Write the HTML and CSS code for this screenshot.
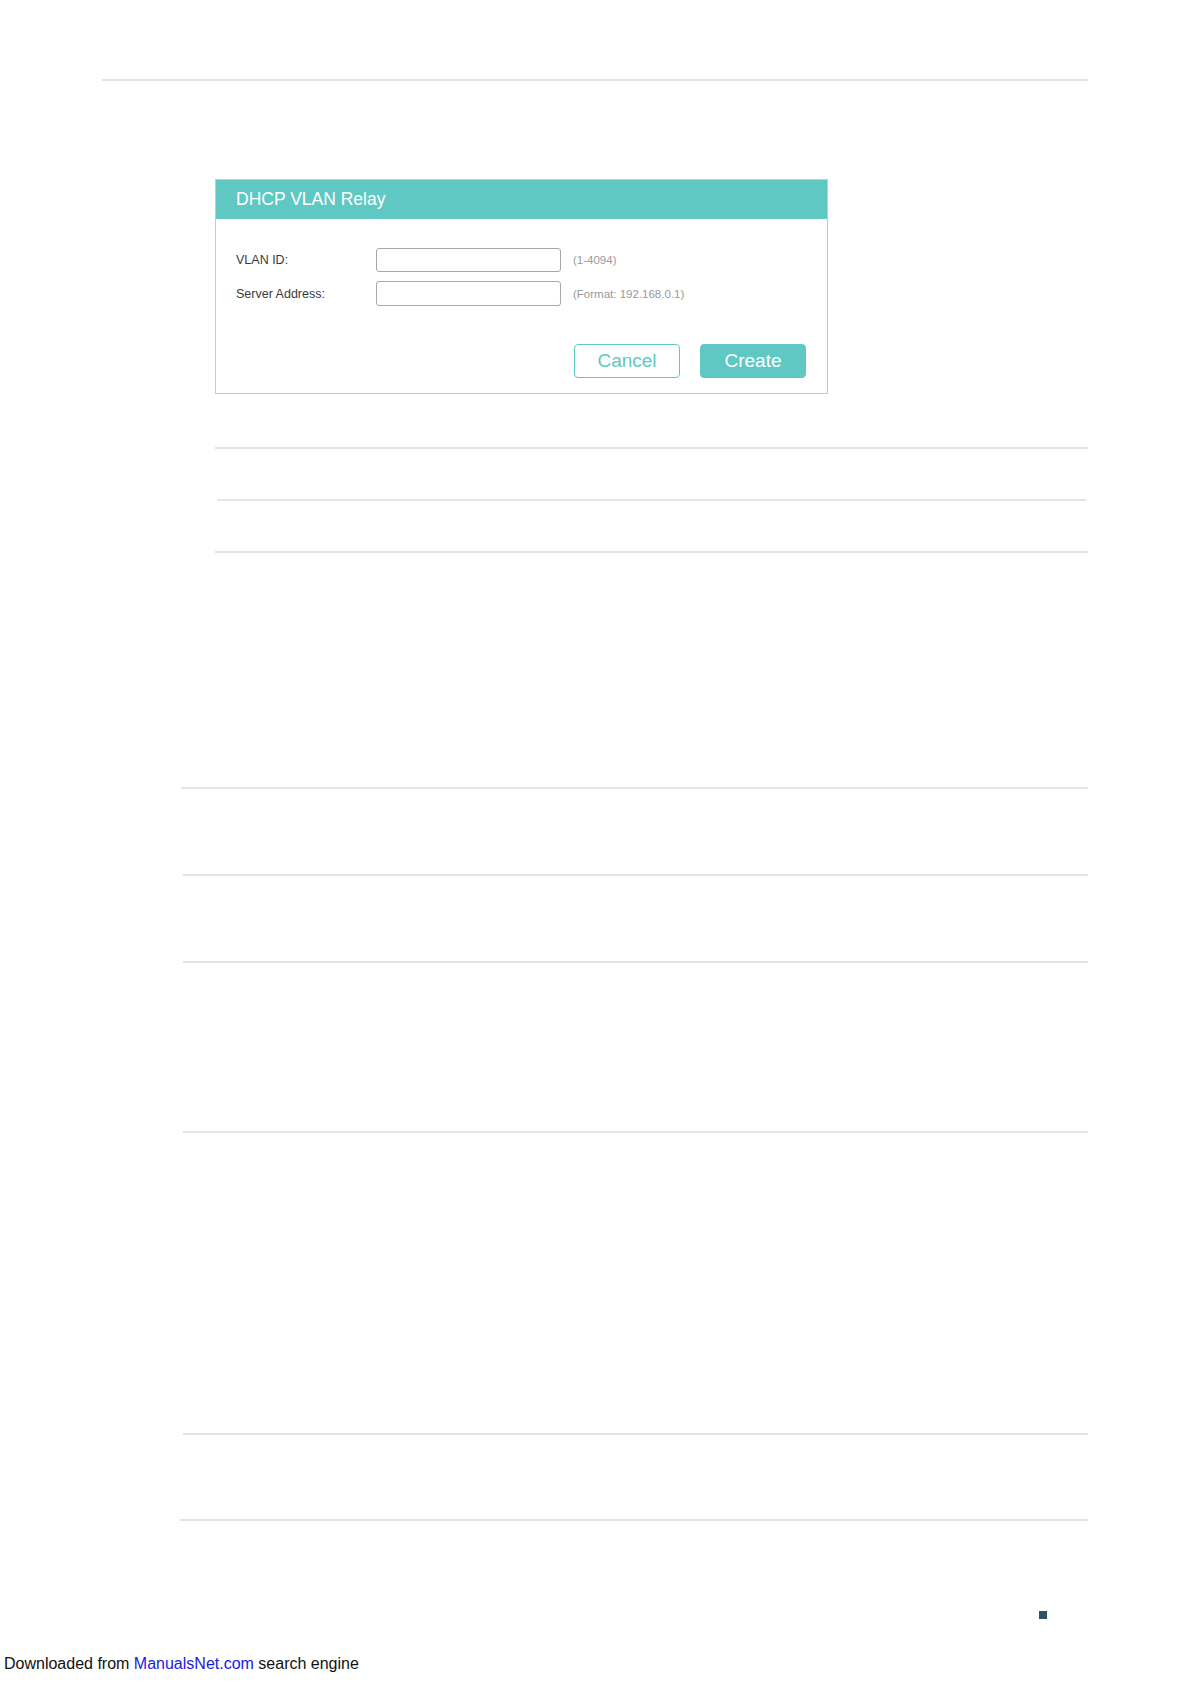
FILE: index.html
```html
<!DOCTYPE html>
<html lang="en">
<head>
    <meta charset="UTF-8">
    <meta name="viewport" content="width=device-width, initial-scale=1.0">
    <title>DHCP VLAN Relay</title>
    <link rel="stylesheet" href="styles.css">
</head>
<body>
    <div class="rule rule-top"></div>

    <div class="dialog">
        <div class="dialog-head">DHCP VLAN Relay</div>
        <div class="dialog-body">
            <div class="field">
                <label class="field-label" for="vlan-id">VLAN ID:</label>
                <input class="field-input" id="vlan-id" type="text">
                <span class="field-hint">(1-4094)</span>
            </div>
            <div class="field">
                <label class="field-label" for="server-addr">Server Address:</label>
                <input class="field-input" id="server-addr" type="text">
                <span class="field-hint">(Format: 192.168.0.1)</span>
            </div>
            <div class="actions">
                <button class="btn btn-cancel">Cancel</button>
                <button class="btn btn-create">Create</button>
            </div>
        </div>
    </div>

    <div class="rule rule-teal r1"></div>
    <div class="rule rule-teal r2"></div>
    <div class="rule rule-teal r3"></div>

    <div class="rule rule-wide r4"></div>
    <div class="rule rule-wide r5"></div>
    <div class="rule rule-wide r6"></div>
    <div class="rule rule-wide r7"></div>
    <div class="rule rule-wide r8"></div>
    <div class="rule rule-wide r9"></div>

    <div class="page-mark"></div>

    <div class="footer">Downloaded from <a href="#">ManualsNet.com</a> search engine</div>
</body>
</html>
```

FILE: styles.css
```css
body {
    margin: 0;
    font-family: "Liberation Sans", Arial, sans-serif;
    color: #333;
    background: #fff;
}
.rule {
    height: 0;
    border-top: 2px solid #e4e4e4;
}
.rule-top {
    margin: 79px 0 0 102px;
    width: 986px;
}
.rule-teal {
    border-top-color: #e0e8e7;
    margin-left: 215px;
    width: 873px;
}
.rule-teal.r1 { margin-top: 53px; }
.rule-teal.r2 { margin-top: 50px; margin-left: 217px; width: 869px; }
.rule-teal.r3 { margin-top: 50px; }
.rule-wide {
    margin-left: 183px;
    width: 905px;
}
.rule-wide.r4 { margin-top: 234px; margin-left: 181px; width: 907px; }
.rule-wide.r5 { margin-top: 85px; }
.rule-wide.r6 { margin-top: 85px; }
.rule-wide.r7 { margin-top: 168px; }
.rule-wide.r8 { margin-top: 300px; }
.rule-wide.r9 { margin-top: 84px; margin-left: 180px; width: 908px; }

.dialog {
    box-sizing: border-box;
    margin: 98px 0 0 215px;
    width: 613px;
    border: 1px solid #c9c9c9;
}
.dialog-head {
    height: 39px;
    line-height: 39px;
    padding-left: 20px;
    background-color: #5fc8c3;
    color: #fff;
    font-size: 17.5px;
}
.dialog-body {
    padding: 29px 21px 15px 20px;
}
.field {
    display: flex;
    align-items: center;
    height: 24px;
    margin-bottom: 9px;
}
.field + .field {
    height: 25px;
}
.field-label {
    width: 140px;
    font-size: 12.5px;
    color: #3a3a3a;
}
.field-input {
    box-sizing: border-box;
    width: 185px;
    height: 100%;
    margin: 0;
    padding: 0 6px;
    border: 1px solid #a8a8a8;
    border-radius: 3px;
    background: #fff;
}
.field-hint {
    margin-left: 12px;
    font-size: 11.5px;
    color: #999;
}
.actions {
    display: flex;
    justify-content: flex-end;
    gap: 20px;
    margin-top: 38px;
}
.btn {
    box-sizing: border-box;
    width: 106px;
    height: 34px;
    padding: 0;
    border: 1px solid #5fc8c3;
    border-radius: 4px;
    font-family: "Liberation Sans", Arial, sans-serif;
    font-size: 19px;
    cursor: pointer;
}
.btn-cancel {
    background: #fff;
    color: #5fc8c3;
}
.btn-create {
    background: #5fc8c3;
    color: #fff;
}

.page-mark {
    width: 8px;
    height: 8px;
    margin: 90px 0 0 1039px;
    background: #2e5366;
}
.footer {
    margin-top: 36px;
    padding-left: 4px;
    font-size: 16px;
    line-height: 18px;
    color: #111;
}
.footer a {
    color: #2020e0;
    text-decoration: none;
}
```
